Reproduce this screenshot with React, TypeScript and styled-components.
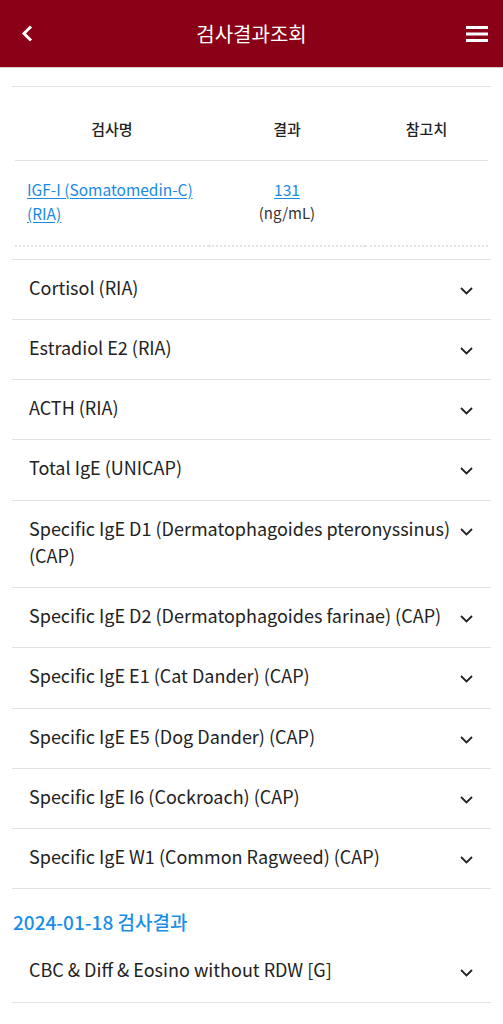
import React from "react";
import styled, { createGlobalStyle } from "styled-components";

const Global = createGlobalStyle`
  html, body { margin: 0; padding: 0; background: #fff; }
  body { font-family: "Noto Sans CJK KR", "Noto Sans", sans-serif; color: #222; }
  * { box-sizing: border-box; }
`;

const Header = styled.header`
  height: 68px;
  background: #8a0016;
  display: grid;
  grid-template-columns: 60px 1fr 60px;
  align-items: center;
  color: #fff;
  border-bottom: 1px solid #d9c4c7;
`;

const IconButton = styled.button<{ $align: "start" | "end" }>`
  background: none;
  border: 0;
  padding: 0;
  height: 67px;
  display: flex;
  align-items: center;
  justify-content: ${(p) => (p.$align === "start" ? "flex-start" : "flex-end")};
  padding-left: ${(p) => (p.$align === "start" ? "21px" : "0")};
  padding-right: ${(p) => (p.$align === "end" ? "15px" : "0")};
`;

const Title = styled.h1`
  margin: 0;
  text-align: center;
  font-size: 20px;
  font-weight: 400;
`;

const Content = styled.main`
  padding: 18px 12px 0;
`;

const TableSection = styled.section`
  border-top: 1px solid #e2e2e2;
  padding: 0 3px 12px;
  border-bottom: 1px solid #e2e2e2;
`;

const Table = styled.table`
  width: 100%;
  border-collapse: collapse;
  table-layout: fixed;
`;

const Th = styled.th<{ $w: string }>`
  width: ${(p) => p.$w};
  height: 73px;
  padding-top: 12px;
  font-size: 15px;
  font-weight: 500;
  color: #222;
  text-align: center;
  border-bottom: 1px solid #e2e2e2;
`;

const Td = styled.td`
  padding: 16px 0 20px 12px;
  vertical-align: top;
  font-size: 15.5px;
  line-height: 24px;
  text-align: left;
  border-bottom: 2px dotted #e4e4e4;
`;

const TdCenter = styled(Td)`
  padding-left: 0;
  text-align: center;
`;

const Link = styled.a`
  color: #1a8ae4;
  text-decoration: underline;
  text-underline-offset: 2px;
  cursor: pointer;
`;

const Unit = styled.div`
  color: #333;
  font-size: 15px;
`;

const Row = styled.div`
  display: flex;
  align-items: flex-start;
  justify-content: space-between;
  padding: 14px 18px 18px 17px;
  border-bottom: 1px solid #e2e2e2;
`;

const RowText = styled.span`
  font-size: 18px;
  line-height: 27.25px;
  color: #222;
  flex: 1;
`;

const Chevron = styled.svg`
  flex: none;
  margin-top: 13px;
  margin-left: 6px;
`;

const DateHeading = styled.h2`
  margin: 0;
  padding: 21px 1px 8px;
  font-size: 19px;
  line-height: 24px;
  font-weight: 500;
  color: #1a8fe9;
`;

const ChevronDown = () => (
  <Chevron width="13" height="8" viewBox="0 0 13 8">
    <path d="M1 1 L6.5 6.5 L12 1" fill="none" stroke="#222" strokeWidth="1.8" />
  </Chevron>
);

const items = [
  "Cortisol (RIA)",
  "Estradiol E2 (RIA)",
  "ACTH (RIA)",
  "Total IgE (UNICAP)",
  "Specific IgE D1 (Dermatophagoides pteronyssinus) (CAP)",
  "Specific IgE D2 (Dermatophagoides farinae) (CAP)",
  "Specific IgE E1 (Cat Dander) (CAP)",
  "Specific IgE E5 (Dog Dander) (CAP)",
  "Specific IgE I6 (Cockroach) (CAP)",
  "Specific IgE W1 (Common Ragweed) (CAP)",
];

const items2 = ["CBC & Diff & Eosino without RDW [G]", "ESR"];

export default function App() {
  return (
    <>
      <Global />
      <Header>
        <IconButton $align="start" aria-label="back">
          <svg width="12" height="17" viewBox="0 0 12 17">
            <path d="M10 1.5 L3 8.5 L10 15.5" fill="none" stroke="#fff" strokeWidth="3" />
          </svg>
        </IconButton>
        <Title>검사결과조회</Title>
        <IconButton $align="end" aria-label="menu">
          <svg width="22" height="16" viewBox="0 0 22 16">
            <rect x="0" y="0" width="22" height="3" fill="#fff" />
            <rect x="0" y="6.5" width="22" height="3" fill="#fff" />
            <rect x="0" y="13" width="22" height="3" fill="#fff" />
          </svg>
        </IconButton>
      </Header>
      <Content>
        <TableSection>
          <Table>
            <thead>
              <tr>
                <Th $w="41%">검사명</Th>
                <Th $w="33%">결과</Th>
                <Th $w="26%">참고치</Th>
              </tr>
            </thead>
            <tbody>
              <tr>
                <Td>
                  <Link>IGF-I (Somatomedin-C) (RIA)</Link>
                </Td>
                <TdCenter>
                  <Link>131</Link>
                  <Unit>(ng/mL)</Unit>
                </TdCenter>
                <TdCenter></TdCenter>
              </tr>
            </tbody>
          </Table>
        </TableSection>
        {items.map((t) => (
          <Row key={t}>
            <RowText>{t}</RowText>
            <ChevronDown />
          </Row>
        ))}
        <DateHeading>2024-01-18 검사결과</DateHeading>
        {items2.map((t) => (
          <Row key={t}>
            <RowText>{t}</RowText>
            <ChevronDown />
          </Row>
        ))}
      </Content>
    </>
  );
}
